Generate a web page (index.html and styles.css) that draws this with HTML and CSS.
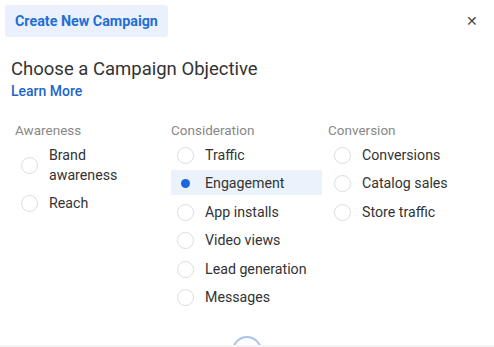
FILE: index.html
```html
<!DOCTYPE html>
<html lang="en">
<head>
    <meta charset="UTF-8">
    <title>Create New Campaign</title>
    <link rel="stylesheet" href="styles.css">
</head>
<body>
    <div class="dialog">
        <div class="top-bar">
            <span class="tab">Create New Campaign</span>
            <span class="close">&#x2715;</span>
        </div>
        <h2 class="title">Choose a Campaign Objective</h2>
        <a class="learn" href="#">Learn More</a>

        <div class="columns">
            <div class="col">
                <div class="col-head">Awareness</div>
                <label class="opt"><span class="radio"></span><span class="opt-text">Brand<br>awareness</span></label>
                <label class="opt"><span class="radio"></span><span class="opt-text">Reach</span></label>
            </div>
            <div class="col">
                <div class="col-head">Consideration</div>
                <label class="opt"><span class="radio"></span><span class="opt-text">Traffic</span></label>
                <label class="opt selected"><span class="radio"></span><span class="opt-text">Engagement</span></label>
                <label class="opt"><span class="radio"></span><span class="opt-text">App installs</span></label>
                <label class="opt"><span class="radio"></span><span class="opt-text">Video views</span></label>
                <label class="opt"><span class="radio"></span><span class="opt-text">Lead generation</span></label>
                <label class="opt"><span class="radio"></span><span class="opt-text">Messages</span></label>
            </div>
            <div class="col">
                <div class="col-head">Conversion</div>
                <label class="opt"><span class="radio"></span><span class="opt-text">Conversions</span></label>
                <label class="opt"><span class="radio"></span><span class="opt-text">Catalog sales</span></label>
                <label class="opt"><span class="radio"></span><span class="opt-text">Store traffic</span></label>
            </div>
        </div>

        <div class="spinner-row"><span class="spinner"></span></div>
    </div>
</body>
</html>
```

FILE: styles.css
```css
* {
    margin: 0;
    padding: 0;
    box-sizing: border-box;
}
body {
    font-family: Roboto, "Liberation Sans", Arial, sans-serif;
    background: #fff;
    color: #333;
    overflow: hidden;
}
.dialog {
    width: 494px;
    height: 347px;
    padding: 5px 0 0 0;
    position: relative;
    overflow: hidden;
}
/* faint edge at the bottom of the dialog */
.dialog::after {
    content: "";
    position: absolute;
    left: 0;
    right: 0;
    bottom: 0;
    height: 2px;
    background: #f4f4f4;
}
.top-bar {
    display: flex;
    justify-content: space-between;
    align-items: center;
    padding: 0 16px 0 5px;
}
.tab {
    background: #eaf1fc;
    color: #1f6fd6;
    font-weight: 700;
    font-size: 14.3px;
    padding: 8px 10px 8px 10px;
    border-radius: 3px;
    height: 32px;
    line-height: 16px;
}
.close {
    color: #4a4a4a;
    font-size: 14px;
    line-height: 14px;
}
.title {
    font-weight: 400;
    font-size: 18.5px;
    color: #333;
    margin: 21px 0 0 11px;
    line-height: 22px;
}
.learn {
    display: block;
    color: #1f64c8;
    font-size: 14px;
    font-weight: 500;
    text-decoration: none;
    margin: 2px 0 0 11px;
    line-height: 18px;
}
.columns {
    display: grid;
    grid-template-columns: 157px 157px 157px;
    margin: 21px 0 0 15px;
}
.col-head {
    color: #888;
    font-size: 13.5px;
    line-height: 18px;
    margin-bottom: 3px;
}
.col:nth-child(2) .col-head,
.col:nth-child(3) .col-head {
    margin-left: -1px;
}
.opt {
    display: flex;
    align-items: flex-start;
    gap: 11px;
    font-size: 14.2px;
    line-height: 20px;
    color: #333;
    padding: 3px 0 2px 6px;
    margin: 0 0 3.4px -1px;
    width: 151px;
}
.col:first-child .opt {
    margin-left: 0;
    padding-left: 6px;
}
.col:first-child .opt .radio {
    margin-top: 12px;
}
.col:first-child .opt:last-child .radio {
    margin-top: 2px;
}
.radio {
    width: 17px;
    height: 17px;
    border: 1px solid #dcdcdc;
    border-radius: 50%;
    margin-top: 2px;
    flex-shrink: 0;
    display: flex;
    align-items: center;
    justify-content: center;
}
.opt.selected {
    background: #eaf3fc;
}
.opt.selected .radio {
    border-color: transparent;
}
.opt.selected .radio::after {
    content: "";
    width: 9px;
    height: 9px;
    border-radius: 50%;
    background: #1a66e0;
}
.spinner-row {
    display: flex;
    justify-content: center;
    margin-top: 24px;
    height: 10px;
}
.spinner {
    width: 30px;
    height: 30px;
    border: 2px solid #a9c3e8;
    border-radius: 50%;
    flex-shrink: 0;
}
```
